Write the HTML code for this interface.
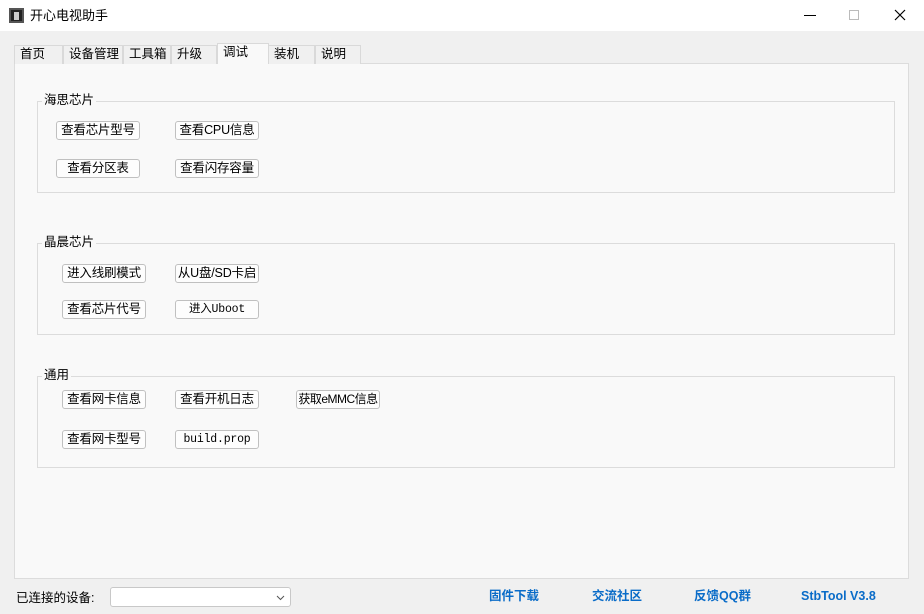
<!DOCTYPE html><html><head><meta charset="utf-8"><style>
*{margin:0;padding:0;box-sizing:border-box}
body{width:924px;height:614px;background:#f0f0f0;font-family:"Liberation Sans","Noto Sans CJK SC",sans-serif;font-size:12px;color:#000;position:relative;overflow:hidden}
.a{position:absolute;white-space:nowrap}
.tb{left:0;top:0;width:924px;height:31px;background:#fff}
.tab{position:absolute;top:45px;height:19px;border:1px solid #d9d9d9;border-bottom:none;background:#f0f0f0;padding-left:5px;line-height:17px;font-size:12.5px;white-space:nowrap}
.panel{left:14px;top:63px;width:895px;height:516px;background:#f9f9f9;border:1px solid #dcdcdc}
.g{position:absolute;border:1px solid #dcdcdc}
.gl{position:absolute;background:#f9f9f9;padding:0 2px;font-size:12.5px;line-height:14px}
.b{position:absolute;width:84px;height:19px;border:1px solid #c0c0c0;border-radius:3px;background:#fdfdfd;text-align:center;line-height:17px;font-size:12.5px;white-space:nowrap;overflow:hidden;letter-spacing:-0.2px}
.l{position:absolute;top:588px;line-height:16px;color:#0a6cc8;font-weight:bold;font-size:12.5px;white-space:nowrap}
</style></head><body>
<div class="a tb"></div>
<div class="a" style="left:9px;top:8px;width:15px;height:15px;background:#222;border:2px solid #555"><div style="margin:2px 3px;width:5px;height:8px;background:#ccc"></div></div>
<div class="a" style="left:30px;top:7px;font-size:13px;line-height:17px">开心电视助手</div>
<div class="a" style="left:804px;top:15px;width:12px;height:1px;background:#000"></div>
<div class="a" style="left:849px;top:10px;width:10px;height:10px;border:1px solid #bbb"></div>
<svg class="a" style="left:894px;top:9px" width="12" height="12"><path d="M1 1L11 11M11 1L1 11" stroke="#000" stroke-width="1.2"/></svg>
<div class="a panel"></div>
<div class="tab" style="left:14px;width:49px">首页</div>
<div class="tab" style="left:63px;width:60px">设备管理</div>
<div class="tab" style="left:123px;width:48px">工具箱</div>
<div class="tab" style="left:171px;width:46px">升级</div>
<div class="tab" style="left:217px;width:52px;top:43px;height:21px;background:#f9f9f9">调试</div>
<div class="tab" style="left:268px;width:47px">装机</div>
<div class="tab" style="left:315px;width:46px">说明</div>

<div class="g" style="left:37px;top:101px;width:858px;height:92px"></div>
<div class="gl" style="left:42px;top:93px">海思芯片</div>
<div class="b" style="left:56px;top:121px">查看芯片型号</div>
<div class="b" style="left:175px;top:121px">查看CPU信息</div>
<div class="b" style="left:56px;top:159px">查看分区表</div>
<div class="b" style="left:175px;top:159px">查看闪存容量</div>

<div class="g" style="left:37px;top:243px;width:858px;height:92px"></div>
<div class="gl" style="left:42px;top:235px">晶晨芯片</div>
<div class="b" style="left:62px;top:264px">进入线刷模式</div>
<div class="b" style="left:175px;top:264px">从U盘/SD卡启</div>
<div class="b" style="left:62px;top:300px">查看芯片代号</div>
<div class="b" style="left:175px;top:300px;font-family:'Liberation Mono','Noto Sans CJK SC',monospace;font-size:11.5px">进入Uboot</div>

<div class="g" style="left:37px;top:376px;width:858px;height:92px"></div>
<div class="gl" style="left:42px;top:368px">通用</div>
<div class="b" style="left:62px;top:390px">查看网卡信息</div>
<div class="b" style="left:175px;top:390px">查看开机日志</div>
<div class="b" style="left:296px;top:390px;font-size:12px;letter-spacing:-0.5px">获取eMMC信息</div>
<div class="b" style="left:62px;top:430px">查看网卡型号</div>
<div class="b" style="left:175px;top:430px;font-family:'Liberation Mono',monospace;font-size:11.5px">build.prop</div>

<div class="a" style="left:16px;top:590px;font-size:12.5px;line-height:16px">已连接的设备:</div>
<div class="a" style="left:110px;top:587px;width:181px;height:20px;background:#fff;border:1px solid #c8c8c8;border-radius:3px"><svg style="position:absolute;right:5px;top:7px" width="9" height="6"><path d="M1 1L4.5 4.5L8 1" stroke="#555" fill="none"/></svg></div>
<div class="l" style="left:489px">固件下载</div>
<div class="l" style="left:592px">交流社区</div>
<div class="l" style="left:694px">反馈QQ群</div>
<div class="l" style="left:801px">StbTool V3.8</div>
</body></html>
